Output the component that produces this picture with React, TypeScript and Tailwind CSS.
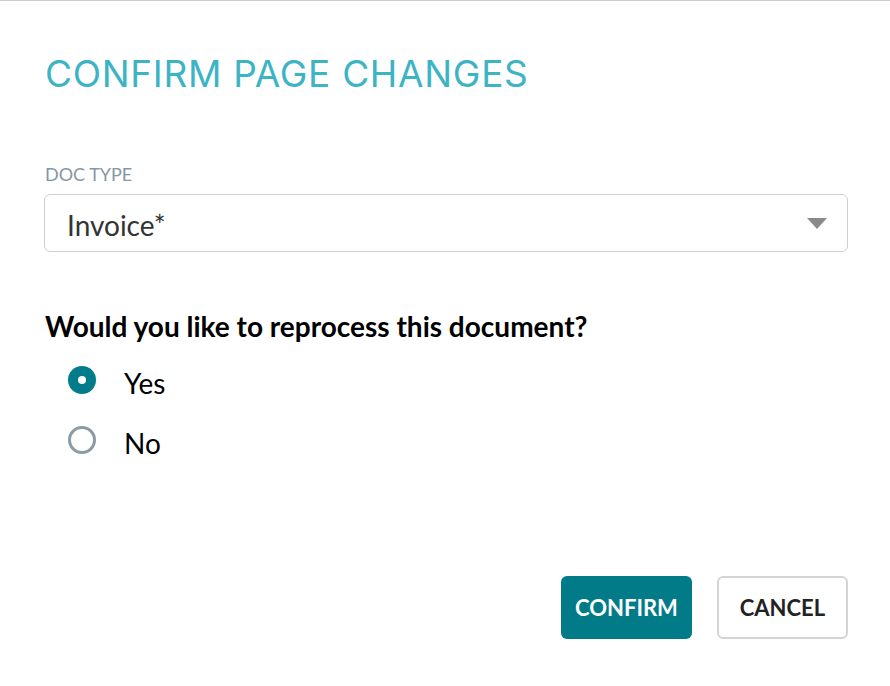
import React from "react";

export default function App() {
  return (
    <div className="w-[890px] h-[686px] bg-white border-t border-[#cccccc] overflow-hidden" style={{ fontFamily: "Lato, 'Open Sans', sans-serif" }}>
      <div className="pl-[45px] pr-[42px] pt-[51px]">
        <h1 className="text-[37px] leading-[44px] text-[#3cb4c5] tracking-[0.7px] font-normal" style={{ fontFamily: "Inter, 'Noto Sans', sans-serif" }}>
          CONFIRM PAGE CHANGES
        </h1>
        <div className="mt-[68px] text-[18px] leading-[20px] text-[#8597a2] uppercase">Doc Type</div>
        <div className="mt-[10px] -ml-px h-[58px] border border-[#cfcfcf] rounded-[6px] flex items-center justify-between pl-[22px] pr-[20px]">
          <span className="text-[28px] leading-[34px] pt-[4px] text-[#333333]">Invoice*</span>
          <svg width="20" height="11" viewBox="0 0 20 11"><polygon points="0,0 20,0 10,11" fill="#8a8a8a" /></svg>
        </div>
        <div className="mt-[57px] text-[28px] leading-[34px] font-bold text-black">Would you like to reprocess this document?</div>
        <div className="mt-[23px] flex flex-col gap-[26px] pl-[23px]">
          <label className="flex items-start gap-[28px] h-[34px]">
            <span className="w-[28px] h-[28px] rounded-full bg-[#027c8a] flex items-center justify-center">
              <span className="w-[8px] h-[8px] rounded-full bg-white" />
            </span>
            <span className="text-[28px] leading-[34px] text-black">Yes</span>
          </label>
          <label className="flex items-start gap-[28px] h-[34px]">
            <span className="w-[28px] h-[28px] rounded-full border-[3px] border-[#8c9ba5]" />
            <span className="text-[28px] leading-[34px] text-black">No</span>
          </label>
        </div>
        <div className="mt-[116px] flex justify-end gap-[25px]">
          <button className="w-[131px] h-[63px] rounded-[6px] bg-[#027b89] text-white text-[22px] font-bold">CONFIRM</button>
          <button className="w-[131px] h-[63px] rounded-[6px] border-2 border-[#d4d4d4] text-[#222222] text-[22px] font-bold">CANCEL</button>
        </div>
      </div>
    </div>
  );
}
